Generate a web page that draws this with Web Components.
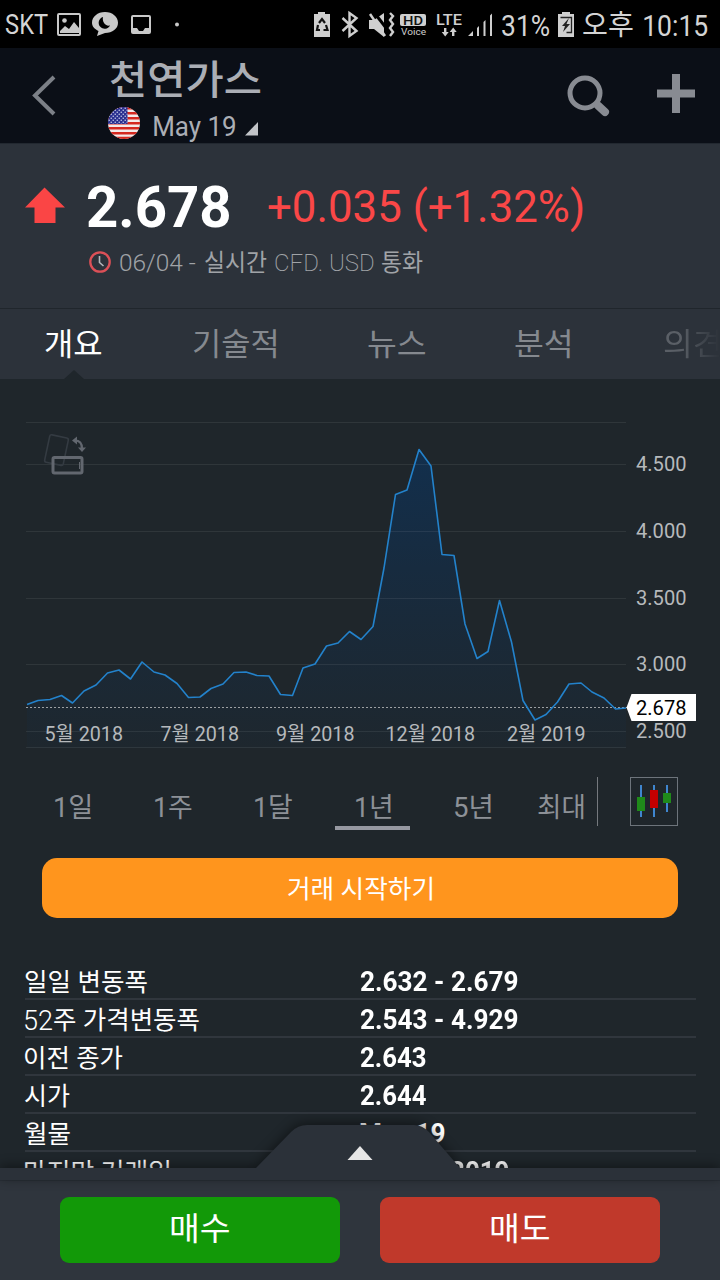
<!DOCTYPE html>
<html lang="ko">
<head>
<meta charset="utf-8">
<title>천연가스</title>
<style>
html,body{margin:0;padding:0;background:#1f262b}
body{width:720px;height:1280px;overflow:hidden;font-family:Roboto,"Noto Sans CJK KR",sans-serif;color:#fff}
</style>
</head>
<body>
<quote-app></quote-app>
<script>
const ctx = document.createElement('canvas').getContext('2d');
const FAMILY = 'Roboto, "Noto Sans CJK KR", sans-serif';

function define(name, html, setup) {
  const t = document.createElement('template');
  t.innerHTML = html;
  customElements.define(name, class extends HTMLElement {
    connectedCallback() {
      if (this.shadowRoot) return;
      const root = this.attachShadow({ mode: 'open' });
      root.append(t.content.cloneNode(true));
      if (setup) setup(this, root);
    }
  });
}

// A single line of text condensed or widened to the ink width in `w`.
define('fit-text', `<style>
:host{display:block;flex:none;height:40px;line-height:40px}
span{display:block;width:max-content;white-space:pre;transform-origin:0 50%}
</style><span></span>`, (el, root) => {
  const s = root.querySelector('span');
  const size = +el.getAttribute('size'), weight = el.getAttribute('weight') || 400, w = +el.getAttribute('w');
  s.textContent = el.getAttribute('text');
  s.style.fontSize = size + 'px';
  s.style.fontWeight = weight;
  ctx.font = weight + ' ' + size + 'px ' + FAMILY;
  const m = ctx.measureText(s.textContent);
  const k = w / (m.actualBoundingBoxLeft + m.actualBoundingBoxRight);
  s.style.transform = 'translateX(' + (m.actualBoundingBoxLeft * k) + 'px) scaleX(' + k + ')';
  el.style.width = w + 'px';
});

define('status-bar', `
<style>
:host{display:flex;height:48px;background:#000;color:#d4d4d4;align-items:center;justify-content:space-between;padding:0 12px 0 6px;box-sizing:border-box}
div{display:flex;align-items:center}
svg{display:block;flex:none}
</style>
<div>
  <fit-text text="SKT" size="27" w="42" style="padding-top:2px"></fit-text>
  <svg width="140" height="48" viewBox="48 0 140 48" fill="#c9c9c9">
    <path fill-rule="evenodd" d="M59 13h20q2 0 2 2v19q0 2-2 2H59q-2 0-2-2V15q0-2 2-2zm0 2v19h20V15z"/>
    <circle cx="64.500" cy="20.500" r="2.300"/><path d="M60 31l5-5 4 3 5-7 5 6v5H60z"/>
    <path d="M105 12c7.500 0 13 4.800 13 10.800S112.500 33 105 33l-8 3 1.500-5C94.500 29 92 26.500 92 22.800 92 16.800 97.500 12 105 12z"/>
    <path fill="#000" d="M103 17a6 6 0 1 0 7 8.500c-5 1-8-4-7-8.500z"/>
    <path fill-rule="evenodd" d="M133 15h16q2 0 2 2v15q0 2-2 2h-16q-2 0-2-2V17q0-2 2-2zm0 2v11h4l2 3h4l2-3h4V17z"/>
    <circle cx="177" cy="24.500" r="2"/>
  </svg>
</div>
<div>
  <svg width="188" height="48" viewBox="314 0 188 48" fill="#cfcfcf" stroke-linecap="butt">
    <path d="M318 12h7v2h5v23h-16V14h4z"/>
    <g fill="none" stroke="#111" stroke-width="2.200"><path d="M319 23l3-4 3 4M320 30h-3l1-5M323.500 30h4l-1.500-5"/></g>
    <path fill="none" stroke="#cfcfcf" stroke-width="2.400" d="M342.500 18l14 13-7 5V13l7 5-14 13"/>
    <path d="M369 20h5l10-7v24l-10-8h-5z"/><path stroke="#000" stroke-width="3" d="M373 11l17 22"/><path stroke="#cfcfcf" stroke-width="2.500" d="M370 14l15 22"/>
    <path fill="none" stroke="#cfcfcf" stroke-width="2.400" d="M390 13l3 3-3 4 3 4-3 4 3 4-3 4"/>
    <rect x="400" y="14" width="26" height="12" rx="2"/>
    <text x="403" y="24.500" font-size="12.500" font-weight="500" fill="#111" textLength="20" lengthAdjust="spacingAndGlyphs">HD</text>
    <text x="401" y="35" font-size="9.500" textLength="25" lengthAdjust="spacingAndGlyphs">Voice</text>
    <text x="436" y="25" font-size="15.500" font-weight="500" textLength="26" lengthAdjust="spacingAndGlyphs">LTE</text>
    <path d="M444 28h2.400v4h2.300l-3.500 4.500-3.500-4.500h2.300zM452 36h2.400v-4h2.300l-3.500-4.500-3.500 4.500h2.300z"/>
    <path d="M468 36l5-5v5zM477 28l2-2v10h-2zM483.500 22l2-2v16h-2zM490 15.500l2-2V36h-2z"/>
  </svg>
  <fit-text text="31%" size="29" w="47" style="padding-top:3px"></fit-text>
  <svg width="34" height="48" viewBox="549 0 34 48"><path fill="#cfcfcf" d="M562 12h8v2h4v23h-16V14h4z"/><path fill="none" stroke="#222" stroke-width="1.300" d="M560.500 17.500h11v15h-5"/><path fill="#222" d="M569 18l-7 8h3l-2 6 7-8h-3.500z"/></svg>
  <fit-text text="오후" size="28" w="50" style="padding-top:3px;margin-right:11px"></fit-text>
  <fit-text text="10:15" size="29" w="64" style="padding-top:3px"></fit-text>
</div>`);

define('us-flag', `
<style>:host{display:block;width:32px;height:32px}svg{display:block}</style>
<svg width="32" height="32" viewBox="0 0 32 32"><defs><clipPath id="c"><circle cx="16" cy="16" r="16"/></clipPath>
<pattern id="s" width="4" height="4" patternUnits="userSpaceOnUse"><circle cx="1.200" cy="1.200" r=".7" fill="#dfe2f5"/><circle cx="3.200" cy="3.200" r=".7" fill="#dfe2f5"/></pattern></defs>
<g clip-path="url(#c)"><path fill="#f3e9e8" d="M0 0h32v32H0z"/>
<path stroke="#d5281f" stroke-width="2.400" d="M0 1.200h32M0 6.200h32M0 11.200h32M0 16.200h32M0 21.200h32M0 26.200h32M0 31h32"/>
<path fill="#2b3190" d="M0 0h19.500v17H0z"/><path fill="url(#s)" d="M0 0h19.500v17H0z"/></g></svg>`);

define('title-bar', `
<style>
:host{display:flex;height:96px;flex:none;background:#0b0f17;border-bottom:1px solid #222830;box-sizing:border-box;color:#abaeb5}
.back{width:108px}.t{flex:1}
.sub{display:flex;align-items:flex-start;height:36px}
svg{display:block;flex:none}
</style>
<svg class="back" height="94" viewBox="0 48 108 94"><path fill="none" stroke="#7c8087" stroke-width="4" d="M54 77L35 95.500 54 114"/></svg>
<div class="t">
  <fit-text text="천연가스" size="40" weight="500" w="150" style="height:59px;line-height:65px;margin-left:2px"></fit-text>
  <div class="sub"><us-flag></us-flag>
  <fit-text text="May 19" size="28" w="81" style="margin-left:14px"></fit-text>
  <svg width="24" height="36" viewBox="235 107 24 36"><path fill="#c2c4c8" d="M245 135.500h13V122z"/></svg></div>
</div>
<svg width="160" height="94" viewBox="560 48 160 94"><circle cx="585" cy="93" r="15" fill="none" stroke="#888b92" stroke-width="5"/><path stroke="#888b92" stroke-width="8" stroke-linecap="round" d="M598 105.500l7 6.500"/><path fill="#888b92" d="M672 74h8v15.500h15v8h-15V113h-8V97.500h-15v-8h15z"/></svg>`);

define('price-panel', `
<style>
:host{display:flex;flex-direction:column;flex:none;height:164px;background:#2c323a;box-sizing:border-box;padding:37px 0 0 25px}
.a,.b{display:flex;align-items:center}
.a{height:54px}.b{height:40px;margin-top:7px;padding-left:64px;color:#a0a3a7}
.b fit-text{padding-top:1px}
svg{display:block;flex:none}
</style>
<div class="a">
  <svg width="40" height="54" viewBox="25 181 40 54"><path fill="#fa4545" d="M44.500 187.500L65 207.500h-9.500V223h-21v-15.500H25z"/></svg>
  <fit-text text="2.678" size="57" weight="700" w="143" style="margin-left:22px"></fit-text>
  <fit-text text="+0.035 (+1.32%)" size="43.5" w="315" style="margin-left:38px;color:#fa4747"></fit-text>
</div>
<div class="b">
  <svg width="22" height="24" viewBox="0 0 22 24"><circle cx="11" cy="12" r="9.700" fill="none" stroke="#dc5057" stroke-width="2.300"/><path fill="none" stroke="#b4b8bd" stroke-width="1.600" d="M10.500 6v6.500l4 3.500"/></svg>
  <fit-text text="06/04 -" size="24" weight="300" w="76" style="margin-left:9px"></fit-text>
  <fit-text text="실시간" size="24" w="62" style="margin-left:9px"></fit-text>
  <fit-text text="CFD. USD" size="24" weight="200" w="99" style="margin-left:8px"></fit-text>
  <fit-text text="통화" size="24" w="41" style="margin-left:8px"></fit-text>
</div>`);

define('tab-strip', `
<style>
:host{display:flex;flex:none;height:71px;background:#2c323a;border-top:1px solid #20262c;box-sizing:border-box;padding:16px 0 0 45px;color:#85898f;position:relative;overflow:hidden}
.on{color:#fff}.fade{color:#5a5f66}
svg{position:absolute;left:62px;bottom:0}
</style>
<fit-text class="on" text="개요" size="31" w="56"></fit-text>
<fit-text text="기술적" size="31" w="83" style="margin-left:92px"></fit-text>
<fit-text text="뉴스" size="31" w="57" style="margin-left:92px"></fit-text>
<fit-text text="분석" size="31" w="55" style="margin-left:90px"></fit-text>
<fit-text class="fade" text="의견" size="31" w="56" style="margin-left:94px;-webkit-mask-image:linear-gradient(90deg,#000 30%,transparent)"></fit-text>
<svg width="24" height="9" viewBox="0 0 24 9"><path fill="#1f262b" d="M2 9L12 0l10 9z"/></svg>`);

const PTS = '27,704.5 38,700.5 50,699.5 61.5,695.5 72.5,703 84,691 96,685 107.5,673 119,670 130.5,679 142,662 154,672 165,675 177,683.5 188.5,697.5 200,697 211,688.5 223,684 234,672.5 246,672 257,675.5 269,676 280.5,694.5 292.5,695.5 303,668 315,664 326.5,646 338,643 349.5,631.5 361,639.5 373,626.5 384,568 395.5,494.5 407,490 419,449.5 431,466 442,554.5 454,555.5 465,624 477,658.5 488,651.5 499.5,600.5 511.5,642 523,700.5 535,720 546,714.5 557.5,702 569,684 581,683 592,692 604,698 615.5,709 626,708';
const axisY = [['4.500',471],['4.000',537.5],['3.500',604.5],['3.000',671],['2.500',738]];
const axisX = [['5월 2018',44.5,78.5],['7월 2018',160.5,78.5],['9월 2018',276,78.5],['12월 2018',385.5,89.5],['2월 2019',507,78.5]];

define('price-chart', `
<style>
:host{display:block;height:386px;background:#1f262b}
svg{display:block;font-family:Roboto,"Noto Sans CJK KR",sans-serif}
</style>
<svg width="720" height="386" viewBox="0 379 720 386">
<defs><linearGradient id="g" x1="0" y1="449" x2="0" y2="748" gradientUnits="userSpaceOnUse"><stop offset="0" stop-color="#122f4d"/><stop offset=".4" stop-color="#172b3f"/><stop offset="1" stop-color="#1e272e"/></linearGradient></defs>
<polygon fill="url(#g)" points="27,748 ${PTS} 626,748"/>
<path stroke="#fff" stroke-opacity=".075" d="M26 422.500h600M26 464.500h600M26 531.500h600M26 598.500h600M26 664.500h600M26 731.500h600M26 747.500h600"/>
<g fill="none" stroke="#343b42" stroke-width="1.600"><rect x="47" y="436" width="19" height="28" rx="2" transform="rotate(12 56 450)"/></g>
<rect x="53" y="457.500" width="29" height="15.500" rx="1.500" fill="none" stroke="#62676f" stroke-width="3"/><path stroke="#62676f" d="M79.500 462v7"/>
<path fill="none" stroke="#62676f" stroke-width="2.200" d="M75 440.500q7 0 7 8"/><path fill="#62676f" d="M72 440.500l5-4v8zM78 447.500h8l-4 4.500z"/>
<path stroke="#9da1a4" stroke-dasharray="2 2" d="M26 707.500h601"/>
<polyline fill="none" stroke="#2382cb" stroke-width="1.600" stroke-linejoin="round" points="${PTS}"/>
<g fill="#b6b9bc" font-size="20">
${axisY.map(a => `<text x="636" y="${a[1]}" textLength="50.5" lengthAdjust="spacingAndGlyphs">${a[0]}</text>`).join('')}
${axisX.map(a => `<text x="${a[1]}" y="741" textLength="${a[2]}" lengthAdjust="spacingAndGlyphs">${a[0]}</text>`).join('')}
</g>
<path fill="#fff" d="M626.500 707.500l5-13.500H696v27h-64.500z"/>
<text x="636" y="715" font-size="20" fill="#000" textLength="50.5" lengthAdjust="spacingAndGlyphs">2.678</text>
</svg>`);

define('range-picker', `
<style>
:host{display:flex;height:66px;padding:12px 42px 0 0;box-sizing:border-box;color:#8d9197}
.i{display:flex;width:75px;height:53px;margin-left:25px;justify-content:center;align-items:flex-start;padding:11px 0 0 2px;box-sizing:border-box;flex:none}
.i.first{margin-left:35px}
.on{border-bottom:4px solid #9698a1}
.i.max{width:47px;margin-left:27px;padding-left:0}
.d{width:1px;height:49px;background:#75797e;margin:0 32px 0 13px}
svg{display:block;flex:none}
</style>
<div class="i first"><fit-text text="1일" size="27" w="36.5"></fit-text></div>
<div class="i"><fit-text text="1주" size="27" w="37"></fit-text></div>
<div class="i"><fit-text text="1달" size="27" w="37"></fit-text></div>
<div class="i on"><fit-text text="1년" size="27" w="36"></fit-text></div>
<div class="i"><fit-text text="5년" size="27" w="37"></fit-text></div>
<div class="i max"><fit-text text="최대" size="27" w="46"></fit-text></div>
<div class="d"></div>
<svg width="48" height="49" viewBox="0 0 48 49"><rect x=".5" y=".5" width="47" height="48" fill="none" stroke="#6d747b"/>
<path stroke="#3f86cf" stroke-width="2" d="M11 8v32M24 8v32M37 8v27"/><path fill="#1f8a1a" d="M7 20h8v14H7zM33 16h8v10h-8z"/><path fill="#c40000" d="M20 13h8v18h-8z"/></svg>`);

define('action-button', `
<style>
:host{display:flex;align-items:center;justify-content:center;color:#fff;box-sizing:border-box;flex:none}
</style><slot></slot>`);

define('stat-row', `
<style>
:host{display:flex;height:38px;border-bottom:2px solid #30363d;box-sizing:border-box;color:#fff}
.l{width:335px}
.l fit-text{padding-top:1px}
</style>
<div class="l"></div><div class="v"></div>`, (el, root) => {
  const add = (sel, key, size, weight) => {
    const f = document.createElement('fit-text');
    f.setAttribute('text', el.getAttribute(key));
    f.setAttribute('size', size);
    f.setAttribute('weight', weight);
    f.setAttribute('w', el.getAttribute(key + '-w'));
    root.querySelector(sel).append(f);
    return f;
  };
  const lead = el.getAttribute('lead');
  if (lead) {
    root.querySelector('.l').style.display = 'flex';
    const n = add('.l', 'lead', 27, 300);
    n.style.marginRight = '2px';
  }
  add('.l', 'label', 25, 400);
  add('.v', 'value', 27, 700);
});

define('trade-bar', `
<style>
:host{display:block;position:absolute;left:0;right:0;bottom:0;height:160px}
.h{display:block;filter:drop-shadow(0 -2px 6px rgba(0,0,0,.45))}
.b{display:flex;gap:40px;padding:16px 60px 0;height:100px;box-sizing:border-box;background:#2f353d;border-top:1px solid #292f37}
action-button{width:280px;height:66px;border-radius:9px;padding-bottom:2px}
</style>
<svg class="h" width="720" height="60" viewBox="0 1120 720 60"><path fill="#2b3139" d="M-20 1168H256L291 1132Q298 1125 307 1125H414Q422 1125 429 1132L460 1168H740V1181H-20z"/><path fill="#e6e6e6" d="M360 1146l12.500 14h-25z"/></svg>
<div class="b">
<action-button style="background:#129908"><fit-text text="매수" size="32" w="58"></fit-text></action-button>
<action-button style="background:#c0392b"><fit-text text="매도" size="32" w="58"></fit-text></action-button>
</div>`);

define('quote-app', `
<style>
:host{display:flex;flex-direction:column;position:relative;width:720px;height:1280px;overflow:hidden;background:#1f262b}
.cta{background:#ff951d;height:60px;border-radius:15px;margin:27px 42px 44px;padding-top:4px}
.list{padding:0 24px 0 25px}
</style>
<status-bar></status-bar>
<title-bar></title-bar>
<price-panel></price-panel>
<tab-strip></tab-strip>
<price-chart style="flex:none"></price-chart>
<range-picker style="flex:none"></range-picker>
<action-button class="cta"><fit-text text="거래 시작하기" size="25" w="144"></fit-text></action-button>
<div class="list">
<stat-row label="일일 변동폭" label-w="122" value="2.632 - 2.679" value-w="158"></stat-row>
<stat-row lead="52" lead-w="27" label="주 가격변동폭" label-w="145" value="2.543 - 4.929" value-w="158"></stat-row>
<stat-row label="이전 종가" label-w="98" value="2.643" value-w="66"></stat-row>
<stat-row label="시가" label-w="45" value="2.644" value-w="66"></stat-row>
<stat-row label="월물" label-w="45" value="May 19" value-w="85"></stat-row>
<stat-row label="마지막 거래일" label-w="145" value="Apr 26, 2019" value-w="149"></stat-row>
</div>
<trade-bar></trade-bar>`);
</script>
</body>
</html>
